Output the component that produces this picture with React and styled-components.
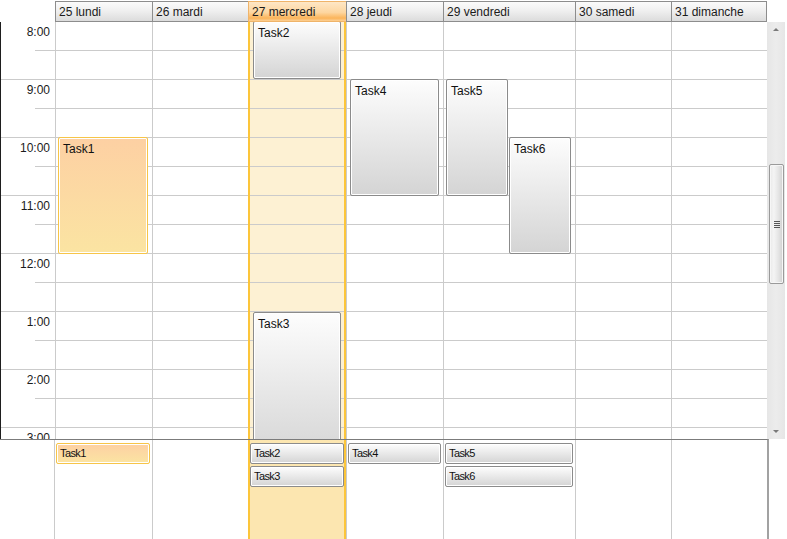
import React from 'react';
import styled, { createGlobalStyle, css } from 'styled-components';

const GlobalStyle = createGlobalStyle`
  html, body {
    margin: 0;
    padding: 0;
    background: #fff;
  }
  body {
    font-family: 'Liberation Sans', Arial, sans-serif;
    color: #1b1b1b;
  }
`;

const DAYS = [
  { label: '25 lundi', width: 97, allDay: 98 },
  { label: '26 mardi', width: 96, allDay: 96 },
  { label: '27 mercredi', width: 98, allDay: 98, today: true },
  { label: '28 jeudi', width: 97, allDay: 97 },
  { label: '29 vendredi', width: 132, allDay: 132 },
  { label: '30 samedi', width: 96, allDay: 96 },
  { label: '31 dimanche', width: 96, allDay: 96 },
];

const HOURS = ['8:00', '9:00', '10:00', '11:00', '12:00', '1:00', '2:00', '3:00'];
const SLOT = 29;

// tasks on the day grid: top / height in px from 8:00
const TASKS = [
  { day: 0, name: 'Task1', left: 2, width: 90, top: 115, height: 117, warm: true },
  { day: 2, name: 'Task2', left: 3, width: 88, top: -1, height: 58 },
  { day: 2, name: 'Task3', left: 3, width: 88, top: 290, height: 150 },
  { day: 3, name: 'Task4', left: 3, width: 89, top: 57, height: 117 },
  { day: 4, name: 'Task5', left: 2, width: 62, top: 57, height: 117 },
  { day: 4, name: 'Task6', left: 65, width: 62, top: 115, height: 117 },
];

const ALLDAY = [
  [{ name: 'Task1', warm: true }],
  [],
  [{ name: 'Task2' }, { name: 'Task3' }],
  [{ name: 'Task4' }],
  [{ name: 'Task5' }, { name: 'Task6' }],
  [],
  [],
];

const Page = styled.div`
  width: 787px;
  height: 539px;
  overflow: hidden;
  display: flex;
  flex-direction: column;
`;

const HeaderRow = styled.div`
  display: flex;
  height: 22px;
  padding-top: 1px;
  box-sizing: border-box;
  flex-shrink: 0;
`;

const Corner = styled.div`
  width: 55px;
`;

const DayHeader = styled.div`
  box-sizing: border-box;
  width: ${(p) => p.$w}px;
  height: 21px;
  padding: 3px 0 0 3px;
  font-size: 12px;
  line-height: 15px;
  white-space: nowrap;
  border: 1px solid #8d8d8d;
  border-right: none;
  background: linear-gradient(#fbfbfb, #f0f0f0 45%, #dcdcdc);
  ${(p) =>
    p.$last &&
    css`
      border-right: 1px solid #8d8d8d;
    `}
  ${(p) =>
    p.$today &&
    css`
      border-color: #efb46a;
      background: linear-gradient(#fee7c6, #fdd6a0 55%, #fbb45a 85%, #fcd095);
    `}
`;

const Main = styled.div`
  display: flex;
  height: 417px;
  flex-shrink: 0;
`;

const Viewport = styled.div`
  width: 767px;
  height: 417px;
  overflow: hidden;
  display: flex;
  align-items: flex-start;
  box-sizing: border-box;
  border-left: 1px solid #1e1e1e;
`;

const TimeCol = styled.div`
  width: 54px;
  flex-shrink: 0;
`;

const HourCell = styled.div`
  position: relative;
  box-sizing: border-box;
  height: ${SLOT * 2}px;
  border-bottom: 1px solid #cbcbcb;
  text-align: right;
  padding: 3px 5px 0 0;
  font-size: 12px;
  line-height: 14px;
  &::after {
    content: '';
    position: absolute;
    left: 34px;
    right: 0;
    top: ${SLOT - 1}px;
    border-top: 1px solid #cbcbcb;
  }
`;

const DayCol = styled.div`
  position: relative;
  box-sizing: border-box;
  width: ${(p) => p.$w}px;
  flex-shrink: 0;
  border-left: 1px solid #cbcbcb;
  ${(p) =>
    p.$today &&
    css`
      background: #fdf1d3;
      border-left: 2px solid #fcc53a;
      border-right: 2px solid #fcc53a;
    `}
`;

const Slot = styled.div`
  box-sizing: border-box;
  height: ${SLOT}px;
  border-bottom: 1px solid #cbcbcb;
`;

const taskLook = css`
  box-sizing: border-box;
  border: 1px solid #8b8b8b;
  border-radius: 2px;
  box-shadow: inset 0 0 0 1px #fff;
  background: linear-gradient(#fdfdfd, #d4d4d4);
  color: #111;
  white-space: nowrap;
  overflow: hidden;
  ${(p) =>
    p.$warm &&
    css`
      border-color: #f7c548;
      background: linear-gradient(#fdd0a3, #fbe4a2);
    `}
`;

const Task = styled.div`
  position: absolute;
  ${taskLook}
  font-size: 12px;
  line-height: 14px;
  padding: 4px 0 0 4px;
`;

const Scrollbar = styled.div`
  position: relative;
  width: 18px;
  height: 417px;
  background: linear-gradient(90deg, #e6e6e6, #ececec 50%, #e6e6e6);
  display: flex;
  flex-direction: column;
  align-items: center;
  justify-content: space-between;
  padding: 6px 0;
  box-sizing: border-box;
`;

const Arrow = styled.div`
  width: 0;
  height: 0;
  border-left: 3px solid transparent;
  border-right: 3px solid transparent;
  ${(p) =>
    p.$down
      ? css`
          border-top: 3px solid #7a7a7a;
        `
      : css`
          border-bottom: 3px solid #7a7a7a;
        `}
`;

const Thumb = styled.div`
  position: absolute;
  left: 2px;
  top: 142px;
  width: 15px;
  height: 120px;
  box-sizing: border-box;
  border: 1px solid #9a9a9a;
  border-radius: 2px;
  box-shadow: inset 0 0 0 1px #f6f6f6;
  background: linear-gradient(90deg, #e9e9e9, #f4f4f4 30%, #e2e2e2 70%, #cfcfcf);
  display: flex;
  flex-direction: column;
  align-items: center;
  justify-content: center;
  gap: 1px;
`;

const Grip = styled.span`
  display: block;
  width: 6px;
  height: 1px;
  background: #555;
`;

const AllDay = styled.div`
  display: flex;
  flex: 1;
  width: 769px;
  box-sizing: border-box;
  border-top: 1px solid #7b7b7b;
  border-right: 2px solid #a2a2a2;
`;

const AllDayGutter = styled.div`
  width: 54px;
  flex-shrink: 0;
`;

const AllDayCell = styled.div`
  box-sizing: border-box;
  width: ${(p) => p.$w}px;
  flex-shrink: 0;
  border-left: 1px solid #cbcbcb;
  padding: 3px 2px 0 1px;
  display: flex;
  flex-direction: column;
  gap: 2px;
  ${(p) =>
    p.$today &&
    css`
      background: #fce6b0;
      border-left: 2px solid #fcc53a;
      border-right: 2px solid #fcc53a;
      padding: 3px 0 0 0;
    `}
`;

const AllDayItem = styled.div`
  ${taskLook}
  height: 21px;
  font-size: 11px;
  letter-spacing: -0.6px;
  line-height: 18px;
  padding-left: 3px;
`;

export default function App() {
  return (
    <>
      <GlobalStyle />
      <Page>
        <HeaderRow>
          <Corner />
          {DAYS.map((d, i) => (
            <DayHeader
              key={d.label}
              $w={d.width}
              $today={d.today}
              $last={i === DAYS.length - 1}
            >
              {d.label}
            </DayHeader>
          ))}
        </HeaderRow>

        <Main>
          <Viewport>
            <TimeCol>
              {HOURS.map((h) => (
                <HourCell key={h}>{h}</HourCell>
              ))}
            </TimeCol>
            {DAYS.map((d, i) => (
              <DayCol key={d.label} $w={d.width} $today={d.today}>
                {HOURS.flatMap((h) => [
                  <Slot key={h + 'a'} />,
                  <Slot key={h + 'b'} />,
                ])}
                {TASKS.filter((t) => t.day === i).map((t) => (
                  <Task
                    key={t.name}
                    $warm={t.warm}
                    style={{
                      left: t.left,
                      top: t.top,
                      width: t.width,
                      height: t.height,
                    }}
                  >
                    {t.name}
                  </Task>
                ))}
              </DayCol>
            ))}
          </Viewport>
          <Scrollbar>
            <Arrow />
            <Thumb>
              <Grip />
              <Grip />
              <Grip />
              <Grip />
            </Thumb>
            <Arrow $down />
          </Scrollbar>
        </Main>

        <AllDay>
          <AllDayGutter />
          {DAYS.map((d, i) => (
            <AllDayCell key={d.label} $w={d.allDay} $today={d.today}>
              {ALLDAY[i].map((t) => (
                <AllDayItem key={t.name} $warm={t.warm}>
                  {t.name}
                </AllDayItem>
              ))}
            </AllDayCell>
          ))}
        </AllDay>
      </Page>
    </>
  );
}
